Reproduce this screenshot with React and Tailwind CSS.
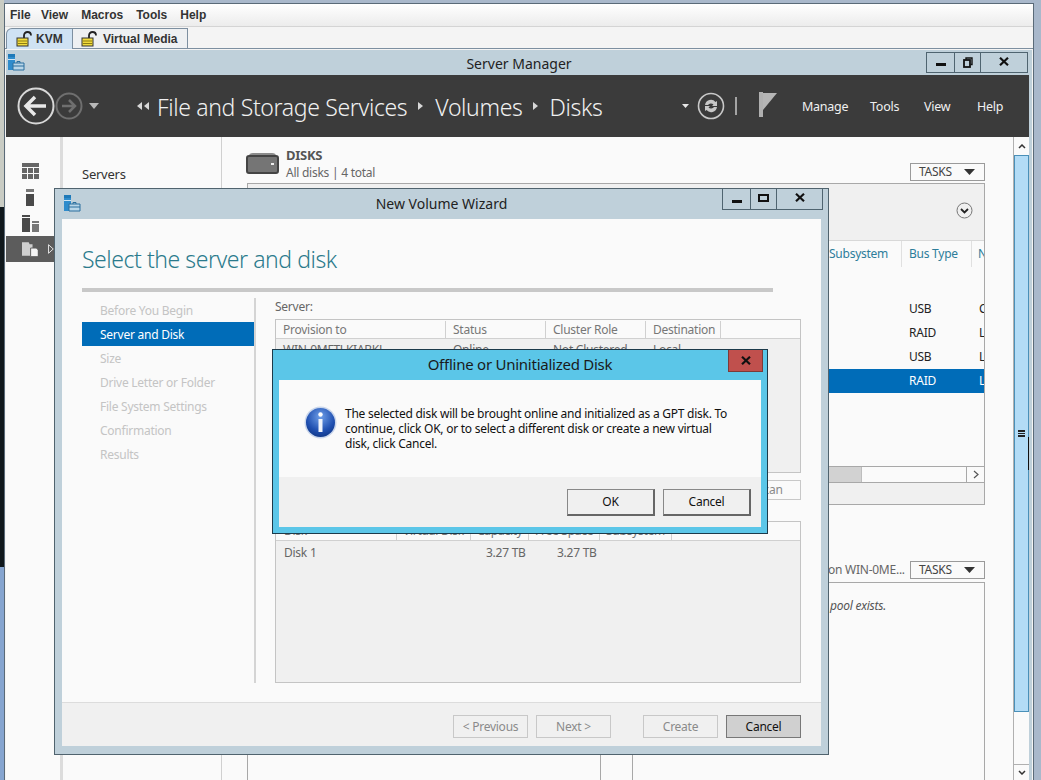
import React from 'react';

const LockIcon = () => (
  <svg width="17" height="16" viewBox="0 0 17 16">
    <path d="M8 7V4.5C8 2.5 9.5 1 11.5 1S15 2.5 15 4.5" fill="none" stroke="#222" strokeWidth="1.8" />
    <rect x="1" y="7" width="11" height="8" fill="#f2dc3c" stroke="#333" />
    <path d="M2 10h9M2 12.5h9" stroke="#8d7d12" />
  </svg>
);

const ServerIcon = () => (
  <svg width="17" height="17" viewBox="0 0 17 17">
    <rect x="0" y="0" width="7" height="3" fill="#1e79b8" />
    <rect x="0" y="3" width="7" height="13" fill="#2f8ccc" />
    <rect x="0" y="5" width="7" height="1" fill="#cfe6f5" />
    <path d="M5 9h11v7H5z" fill="#b9d6e8" stroke="#2a6f9e" />
    <path d="M9 9V7.5h3V9M5 12h11" fill="none" stroke="#2a6f9e" />
  </svg>
);

const CloseX = () => (
  <svg width="10" height="9" viewBox="0 0 10 9">
    <path d="M1 0.8L9 8.2M9 0.8L1 8.2" stroke="#111" strokeWidth="2.2" />
  </svg>
);

const WinButtons = ({ restore, widths, className }) => (
  <div className={`flex border border-[#4f6470] h-[21px] ${className}`}>
    <div className={`${widths[0]} flex items-end justify-center pb-[6px] border-r border-[#4f6470]`}>
      <div className="w-[10px] h-[3px] bg-[#111]" />
    </div>
    <div className={`${widths[1]} flex items-center justify-center border-r border-[#4f6470]`}>
      {restore ? (
        <svg width="10" height="11" viewBox="0 0 10 11">
          <path d="M3 2.5V1h6v6.5H7.5" fill="none" stroke="#111" strokeWidth="1.4" />
          <rect x="1" y="3" width="6" height="7" fill="none" stroke="#111" strokeWidth="1.8" />
        </svg>
      ) : (
        <div className="w-[11px] h-[8px] border-2 border-[#111] mb-[3px]" />
      )}
    </div>
    <div className={`${widths[2]} flex items-center justify-center pb-[3px]`}>
      <CloseX />
    </div>
  </div>
);

const TasksButton = () => (
  <div className="w-[75px] h-[18px] border border-[#9a9a9a] bg-[#fafafa] flex items-center justify-between pl-[8px] pr-[9px] text-[12px] text-[#444]">
    <span>TASKS</span>
    <svg width="11" height="6" viewBox="0 0 11 6"><path d="M0 0h11L5.5 6z" fill="#333" /></svg>
  </div>
);

const NavSidebar = () => (
  <div className="w-[54px] shrink-0 pt-[26px] flex flex-col items-start">
    <svg className="ml-[16px]" width="17" height="16" viewBox="0 0 17 16">
      <path d="M0 0h17v4H0zM0 5h5v5H0zM6 5h5v5H6zM12 5h5v5h-5zM0 11h5v5H0zM6 11h5v5H6zM12 11h5v5h-5z" fill="#666" />
    </svg>
    <svg className="ml-[20px] mt-[10px]" width="8" height="17" viewBox="0 0 8 17">
      <path d="M0 0h8v3H0z" fill="#777" /><path d="M0 5h8v12H0z" fill="#4a4a4a" />
    </svg>
    <svg className="ml-[16px] mt-[9px]" width="17" height="17" viewBox="0 0 17 17">
      <path d="M0 0h8v2H0zM0 3h8v14H0z" fill="#4a4a4a" /><path d="M10 6h7v2h-7z" fill="#777" /><path d="M10 9h7v8h-7z" fill="#777" />
    </svg>
    <div className="mt-[4px] w-[48px] h-[26px] bg-[#5c5c5c] flex items-center pl-[16px]">
      <svg width="17" height="16" viewBox="0 0 17 16">
        <path d="M0 1h7l1 2h3v12H0z" fill="#cfcfcf" /><path d="M9 7h6l2 2v7H9z" fill="#f4f4f4" stroke="#5c5c5c" />
      </svg>
      <svg className="ml-[10px]" width="6" height="10" viewBox="0 0 6 10"><path d="M0.5 0.5v9L5.5 5z" fill="none" stroke="#e8e8e8" /></svg>
    </div>
  </div>
);

// background panels of Server Manager, most of it sits behind the wizard
const DisksPanel = () => (
  <div className="flex-1 min-w-0 pt-[16px] pl-[24px] pr-[28px] flex flex-col">
    <div className="h-[30px] flex items-start">
      <svg width="33" height="21" viewBox="0 0 33 21">
        <path d="M3 3Q3 0 7 0h19q4 0 4 3z" fill="#8b8b8b" />
        <rect x="1" y="3" width="31" height="17" rx="2" fill="#757575" stroke="#444" strokeWidth="2" />
        <rect x="25" y="10" width="3" height="2" fill="#eee" />
      </svg>
      <div className="ml-[7px] -mt-[6px]">
        <div className="text-[13px] font-bold text-[#555] leading-[17px]">DISKS</div>
        <div className="text-[12px] text-[#666] leading-[17px]">All disks | 4 total</div>
      </div>
      <div className="ml-auto mt-[10px]"><TasksButton /></div>
    </div>
    <div className="h-[322px] border border-[#a8a8a8] flex flex-col ml-[1px]">
      <div className="h-[57px] bg-[#f0f0f0] border-b border-[#d8d8d8] flex items-center justify-end pr-[11px] pb-[4px]">
        <svg width="17" height="17" viewBox="0 0 17 17">
          <circle cx="8.5" cy="8.5" r="7.5" fill="none" stroke="#777" />
          <path d="M5 7l3.5 3.5L12 7" fill="none" stroke="#222" strokeWidth="1.8" />
        </svg>
      </div>
      <div className="h-[26px] flex text-[12px] text-[#2d7d9a] items-center overflow-hidden pl-[581px] leading-[26px]">
        <div className="w-[73px] border-r border-[#e0e0e0] shrink-0">Subsystem</div>
        <div className="w-[70px] pl-[7px] border-r border-[#e0e0e0] shrink-0">Bus Type</div>
        <div className="pl-[6px]">N</div>
      </div>
      <div className="flex-1 pt-[30px] text-[12px] text-[#222] overflow-hidden">
        {[['USB', 'C'], ['RAID', 'L'], ['USB', 'L'], ['RAID', 'L', true]].map(([bus, n, sel], i) => (
          <div key={i} className={`h-[24px] flex items-center pl-[661px] ${sel ? 'bg-[#006cb8] text-white' : ''}`}>
            <div className="w-[70px] shrink-0">{bus}</div>
            <div>{n}</div>
          </div>
        ))}
      </div>
      <div className="h-[17px] border-y border-[#a8a8a8] flex items-stretch bg-[#fafafa]">
        <div className="w-[614px] bg-[#d2d2d2] border-r border-[#bdbdbd]" />
        <div className="ml-auto w-[18px] border-l border-[#a8a8a8] flex items-center justify-center">
          <svg width="6" height="9" viewBox="0 0 6 9"><path d="M1 1l4 3.5L1 8" fill="none" stroke="#555" strokeWidth="1.2" /></svg>
        </div>
      </div>
      <div className="h-[21px] bg-[#f0f0f0]" />
    </div>
    <div className="mt-[56px] flex justify-between items-end h-[18px] ml-[582px]">
      <span className="text-[12px] text-[#666] leading-[18px] whitespace-nowrap">on WIN-0ME...</span>
      <TasksButton />
    </div>
    <div className="mt-[3px] flex-1 flex ml-[1px] gap-[31px]">
      <div className="w-[354px] border-l border-r border-t border-[#a8a8a8]" />
      <div className="flex-1 border-l border-r border-t border-[#a8a8a8] pt-[14px] pl-[197px] text-[12px] italic text-[#555] whitespace-nowrap">
        pool exists.
      </div>
    </div>
  </div>
);

const WizButton = ({ children, active }) => (
  <div className={`w-[75px] h-[23px] pt-[1px] flex items-center justify-center text-[12px] border ${active ? 'bg-[#d0d0d0] border-[#777] text-[#111]' : 'border-[#c8c8c8] text-[#8a8a8a]'}`}>
    {children}
  </div>
);

const Wizard = () => {
  const steps = ['Before You Begin', 'Server and Disk', 'Size', 'Drive Letter or Folder', 'File System Settings', 'Confirmation', 'Results'];
  return (
    <div className="absolute left-[54px] top-[188px] w-[775px] h-[567px] bg-[#bfd0da] border border-[#50636e] flex flex-col">
      <div className="h-[30px] shrink-0 relative flex items-center justify-center text-[14px] tracking-normal text-[#222]">
        <div className="absolute left-[9px] top-[6px]"><ServerIcon /></div>
        <span className="-mt-[2px]">New Volume Wizard</span>
        <WinButtons className="absolute left-[667px] top-0 border-t-0" widths={['w-[28px]', 'w-[26px]', 'w-[45px]']} />
      </div>
      <div className="mx-[7px] flex-1 bg-[#fafafa] flex flex-col">
        <div className="flex-1 px-[20px] pt-[24px] flex flex-col">
          <div className="text-[23px] leading-[32px] text-[#2b7a8c] font-light tracking-[-0.45px]">Select the server and disk</div>
          <div className="h-[4px] w-[691px] bg-[#c8c8c8] mt-[13px]" />
          <div className="flex mt-[6px] flex-1 pb-[19px]">
            <div className="w-[172px] shrink-0 text-[12px] text-[#c4c4c4]">
              {steps.map((s) => (
                <div key={s} className={`h-[24px] pl-[18px] pt-[1px] flex items-center ${s === 'Server and Disk' ? 'bg-[#006cb8] text-white' : ''}`}>{s}</div>
              ))}
            </div>
            <div className="w-[2px] bg-[#d4d4d4] shrink-0" />
            <div className="ml-[19px] w-[526px] text-[12px] text-[#666] flex flex-col">
              <div className="h-[21px] leading-[18px]">Server:</div>
              <div className="h-[154px] border border-[#c4c4c4] bg-[#f0f0f0]">
                <div className="h-[19px] pt-[1px] bg-[#fafafa] border-b border-[#d0d0d0] flex items-center text-[#777]">
                  <div className="w-[170px] pl-[7px] border-r border-[#d0d0d0]">Provision to</div>
                  <div className="w-[100px] pl-[7px] border-r border-[#d0d0d0]">Status</div>
                  <div className="w-[100px] pl-[7px] border-r border-[#d0d0d0]">Cluster Role</div>
                  <div className="w-[75px] pl-[7px] border-r border-[#d0d0d0]">Destination</div>
                </div>
                <div className="flex pt-[2px] text-[#666]">
                  <div className="w-[170px] pl-[7px]">WIN-0MFTLKIABKL</div>
                  <div className="w-[100px] pl-[7px]">Online</div>
                  <div className="w-[100px] pl-[7px]">Not Clustered</div>
                  <div className="w-[75px] pl-[7px]">Local</div>
                </div>
              </div>
              <div className="self-end mt-[7px] h-[20px] w-[75px] border border-[#c8c8c8] flex items-center justify-center text-[#8a8a8a]">Rescan</div>
              <div className="mt-[21px] flex-1 border border-[#c4c4c4] bg-[#f0f0f0]">
                <div className="h-[19px] bg-[#fafafa] border-b border-[#d0d0d0] flex items-center text-[#777]">
                  <div className="w-[121px] pl-[8px] border-r border-[#d0d0d0]">Disk</div>
                  <div className="w-[74px] pl-[6px] border-r border-[#d0d0d0]">Virtual Disk</div>
                  <div className="w-[58px] pl-[6px] border-r border-[#d0d0d0]">Capacity</div>
                  <div className="w-[71px] pl-[6px] border-r border-[#d0d0d0]">Free Space</div>
                  <div className="w-[72px] pl-[6px] border-r border-[#d0d0d0]">Subsystem</div>
                </div>
                <div className="flex h-[23px] items-center">
                  <div className="w-[210px] pl-[8px]">Disk 1</div>
                  <div className="w-[71px]">3.27 TB</div>
                  <div>3.27 TB</div>
                </div>
              </div>
            </div>
          </div>
        </div>
        <div className="h-[44px] shrink-0 bg-[#f0f0f0] border-t border-[#dcdcdc] flex items-start pt-[12px] pl-[391px]">
          <WizButton>&lt; Previous</WizButton>
          <div className="w-[8px]" />
          <WizButton>Next &gt;</WizButton>
          <div className="w-[32px]" />
          <WizButton>Create</WizButton>
          <div className="w-[8px]" />
          <WizButton active>Cancel</WizButton>
        </div>
      </div>
      <div className="h-[8px] shrink-0" />
    </div>
  );
};

const DialogButton = ({ children }) => (
  <div className="w-[88px] h-[27px] border border-t-[#888] border-l-[#888] border-r-2 border-b-2 border-r-[#666] border-b-[#666] flex items-center justify-center text-[12px] text-[#111]">
    {children}
  </div>
);

const InfoIcon = () => (
  <svg width="33" height="33" viewBox="0 0 33 33">
    <defs>
      <radialGradient id="infoBlue" cx="50%" cy="30%" r="70%">
        <stop offset="0%" stopColor="#6f9fe8" />
        <stop offset="70%" stopColor="#1f4fb0" />
        <stop offset="100%" stopColor="#123a8c" />
      </radialGradient>
    </defs>
    <circle cx="16.5" cy="16.5" r="16" fill="#c9d6ec" />
    <circle cx="16.5" cy="16.5" r="14.5" fill="url(#infoBlue)" />
    <circle cx="16.5" cy="8.5" r="2.2" fill="#fff" />
    <rect x="14.5" y="13" width="4" height="13" fill="#f0f4fb" />
  </svg>
);

const Dialog = () => (
  <div className="absolute left-[272px] top-[349px] w-[496px] h-[185px] bg-[#5bc6e8] border border-[#1c3a4a] flex flex-col">
    <div className="h-[30px] shrink-0 relative flex items-center justify-center text-[15px] text-[#1a1a1a]">
      <span className="-mt-[2px]">Offline or Uninitialized Disk</span>
      <div className="absolute left-[455px] top-0 w-[35px] h-[22px] bg-[#c0504d] border border-[#7d3a38] border-t-0 flex items-center justify-center">
        <CloseX />
      </div>
    </div>
    <div className="mx-[6px] flex-1 bg-[#fafafa] flex flex-col">
      <div className="h-[97px] shrink-0 flex pl-[25px] pt-[26px]">
        <InfoIcon />
        <p className="ml-[8px] w-[385px] text-[12px] leading-[15px] text-[#111]">
          The selected disk will be brought online and initialized as a GPT disk. To continue, click OK, or to select a different disk or create a new virtual disk, click Cancel.
        </p>
      </div>
      <div className="flex-1 bg-[#f0f0f0] flex justify-end gap-[8px] pt-[12px] pr-[10px]">
        <DialogButton>OK</DialogButton>
        <DialogButton>Cancel</DialogButton>
      </div>
    </div>
    <div className="h-[6px] shrink-0" />
  </div>
);

export default function App() {
  return (
    <div className="relative w-[1041px] h-[780px] overflow-hidden bg-[#a9b8cb] font-['Noto_Sans',sans-serif] tracking-[-0.25px]">
      {/* desktop showing down the left edge of the kvm window */}
      <div className="absolute left-0 top-0 w-[4px] h-[780px] flex flex-col">
        <div className="h-[207px] bg-[#c9ccc4]" />
        <div className="h-[360px] bg-[#10181c]" />
        <div className="flex-1 bg-[#86a5d0]" />
      </div>
      <div className="absolute left-[4px] right-[7px] top-[3px] bottom-0 bg-[#f4f4f4] border border-[#5a6a78] border-b-0 flex flex-col">
        {/* java kvm client menu */}
        <div className="h-[23px] shrink-0 bg-gradient-to-b from-white to-[#ececec] border-b border-[#d4d4d4] flex items-center gap-[13px] pl-[5px] text-[12px] font-bold text-[#333] font-['Liberation_Sans',sans-serif] tracking-normal">
          <span className="w-[18px]">File</span><span>View</span><span>Macros</span><span>Tools</span><span>Help</span>
        </div>
        <div className="h-[22px] shrink-0 flex items-end pl-[1px] border-b border-[#7d8fa0] font-['Liberation_Sans',sans-serif] tracking-normal text-[12px] font-bold text-[#333]">
          <div className="h-[21px] w-[67px] -mb-[1px] bg-[#cfe2f3] border border-[#7d8fa0] border-b-0 rounded-tl-[6px] flex items-center pl-[9px] gap-[3px]">
            <LockIcon /><span>KVM</span>
          </div>
          <div className="h-[20px] w-[115px] bg-[#eef0f2] border border-[#7d8fa0] border-b-0 border-l-0 flex items-center pl-[8px] gap-[5px]">
            <LockIcon /><span>Virtual Media</span>
          </div>
        </div>
        {/* server manager window */}
        <div className="flex-1 min-h-0 ml-[1px] mr-[1px] mt-[1px] bg-[#bfd0da] flex flex-col">
          <div className="h-[25px] shrink-0 relative flex items-center justify-center text-[14px] tracking-normal text-[#222]">
            <div className="absolute left-[2px] top-[4px]"><ServerIcon /></div>
            <span className="pt-[1px]">Server Manager</span>
            <WinButtons restore className="absolute left-[920px] top-[2px]" widths={['w-[28px]', 'w-[26px]', 'w-[46px]']} />
          </div>
          <div className="h-[62px] shrink-0 mr-[3px] bg-[#3b3b3b] flex items-center text-[#f0f0f0]">
            <svg className="ml-[11px] shrink-0" width="90" height="40" viewBox="0 0 90 40">
              <circle cx="19" cy="20" r="17.5" fill="none" stroke="#d8d8d8" strokeWidth="2" />
              <path d="M29 20H10M18 11l-9 9 9 9" fill="none" stroke="#e8e8e8" strokeWidth="3.5" />
              <circle cx="52" cy="20" r="12.5" fill="none" stroke="#6f6f6f" strokeWidth="2" />
              <path d="M45 20h13M52 14l6 6-6 6" fill="none" stroke="#6f6f6f" strokeWidth="2.5" />
              <path d="M72 17h10l-5 6z" fill="#b8b8b8" />
            </svg>
            <svg className="ml-[29px] shrink-0" width="14" height="8" viewBox="0 0 14 8">
              <path d="M6 0v8L1 4zM13 0v8L8 4z" fill="#d8d8d8" />
            </svg>
            <div className="ml-[7px] pt-[3px] text-[23px] font-light tracking-[-0.35px] whitespace-nowrap flex items-center">
              <span>File and Storage Services</span>
              <svg className="ml-[11px] mr-[12px] mb-[3px]" width="5" height="8" viewBox="0 0 5 8"><path d="M0 0v8l5-4z" fill="#d8d8d8" /></svg>
              <span>Volumes</span>
              <svg className="mx-[11px] mb-[3px]" width="5" height="8" viewBox="0 0 5 8"><path d="M0 0v8l5-4z" fill="#d8d8d8" /></svg>
              <span>Disks</span>
            </div>
            <div className="ml-auto flex items-center shrink-0">
              <svg width="60" height="28" viewBox="0 0 60 28">
                <path d="M1 12h7l-3.5 4z" fill="#e8e8e8" />
                <circle cx="30" cy="14" r="12.5" fill="none" stroke="#c8c8c8" strokeWidth="1.6" />
                <path d="M24 13a6 6 0 0 1 10.5-3l1.5-1v5h-5l1.5-1.5A3.5 3.5 0 0 0 27 13zM36 15a6 6 0 0 1-10.5 3L24 19v-5h5l-1.5 1.5A3.5 3.5 0 0 0 33 15z" fill="#c8c8c8" />
                <path d="M55 5v18" stroke="#c8c8c8" strokeWidth="1.5" />
              </svg>
              <svg className="ml-[18px] -mt-[3px]" width="18" height="25" viewBox="0 0 18 25">
                <path d="M4 1h14L4 18z" fill="#b5b5b5" />
                <path d="M0 0h4v25H0z" fill="#b0b0b0" />
              </svg>
              <div className="ml-[25px] pt-[2px] text-[12.5px] flex">
                <span className="w-[68px]">Manage</span>
                <span className="w-[54px]">Tools</span>
                <span className="w-[53px]">View</span>
                <span className="w-[52px]">Help</span>
              </div>
            </div>
          </div>
          <div className="flex-1 min-h-0 flex bg-[#fafafa] mr-[3px]">
            <NavSidebar />
            <div className="w-[3px] shrink-0 bg-[#dcdcdc]" />
            <div className="w-[159px] shrink-0 border-r border-[#d0d0d0] pl-[19px] pt-[27px] text-[13px] text-[#333] leading-[20px]">Servers</div>
            <DisksPanel />
            {/* page scrollbar */}
            <div className="w-[16px] shrink-0 flex flex-col border-l border-[#b0b0b0]">
              <div className="h-[18px] flex items-center justify-center">
                <svg width="8" height="5" viewBox="0 0 8 5"><path d="M1 4l3-3 3 3" fill="none" stroke="#333" strokeWidth="1.5" /></svg>
              </div>
              <div className="relative h-[557px] bg-[#b3dcf6] border border-[#4a90b8] flex items-center justify-center">
                <div className="w-[7px] h-[7px] border-y-2 border-[#222] flex items-center"><div className="w-full h-[1px] bg-[#222]" /></div>
                <div className="absolute -right-[1px] top-[281px] w-[1px] h-[33px] bg-[#111]" />
              </div>
              <div className="flex-1 flex flex-col justify-end">
                <div className="h-[16px] border-t border-[#b0b0b0] flex items-center justify-center">
                  <svg width="8" height="5" viewBox="0 0 8 5"><path d="M1 1l3 3 3-3" fill="none" stroke="#333" strokeWidth="1.5" /></svg>
                </div>
              </div>
            </div>
          </div>
        </div>
      </div>
      <Wizard />
      <Dialog />
    </div>
  );
}
